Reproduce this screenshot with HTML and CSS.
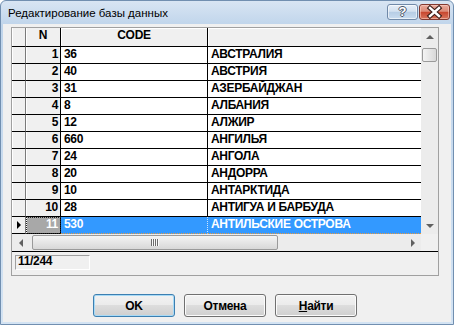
FILE: index.html
```html
<!DOCTYPE html>
<html lang="ru">
<head>
    <meta charset="UTF-8">
    <title>Редактирование базы данных</title>
    <link rel="stylesheet" href="styles.css">
</head>
<body>

<div class="window">
    <div class="titlebar">
        <span class="title">Редактирование базы данных</span>
        <div class="caption-buttons">
            <div class="cap-btn help">?</div>
            <div class="cap-btn close">
                <svg width="29" height="14" viewBox="0 0 29 14">
                    <path d="M10 3 L19 11 M19 3 L10 11" stroke="#3b1d18" stroke-width="4.6" stroke-linecap="square"/>
                    <path d="M10 3 L19 11 M19 3 L10 11" stroke="#fff" stroke-width="2.4" stroke-linecap="square"/>
                </svg>
            </div>
        </div>
    </div>

    <div class="client">
        <div class="dbbox">
            <div class="grid">
                <div class="table">
                    <div class="row head">
                        <div class="ind"></div><div class="num">N</div><div class="code">CODE</div><div class="name"></div>
                    </div>
                    <div class="row"><div class="ind"></div><div class="num">1</div><div class="code">36</div><div class="name">АВСТРАЛИЯ</div></div>
                    <div class="row"><div class="ind"></div><div class="num">2</div><div class="code">40</div><div class="name">АВСТРИЯ</div></div>
                    <div class="row"><div class="ind"></div><div class="num">3</div><div class="code">31</div><div class="name">АЗЕРБАЙДЖАН</div></div>
                    <div class="row"><div class="ind"></div><div class="num">4</div><div class="code">8</div><div class="name">АЛБАНИЯ</div></div>
                    <div class="row"><div class="ind"></div><div class="num">5</div><div class="code">12</div><div class="name">АЛЖИР</div></div>
                    <div class="row"><div class="ind"></div><div class="num">6</div><div class="code">660</div><div class="name">АНГИЛЬЯ</div></div>
                    <div class="row"><div class="ind"></div><div class="num">7</div><div class="code">24</div><div class="name">АНГОЛА</div></div>
                    <div class="row"><div class="ind"></div><div class="num">8</div><div class="code">20</div><div class="name">АНДОРРА</div></div>
                    <div class="row"><div class="ind"></div><div class="num">9</div><div class="code">10</div><div class="name">АНТАРКТИДА</div></div>
                    <div class="row"><div class="ind"></div><div class="num">10</div><div class="code">28</div><div class="name">АНТИГУА И БАРБУДА</div></div>
                    <div class="row current"><div class="ind"><span class="pointer"></span></div><div class="num">11</div><div class="code">530</div><div class="name">АНТИЛЬСКИЕ ОСТРОВА</div></div>
                </div>

                <div class="vscroll">
                    <div class="sbtn"><span class="tri up"></span></div>
                    <div class="vthumb"></div>
                    <div class="vtrack"></div>
                    <div class="sbtn"><span class="tri down"></span></div>
                </div>

                <div class="hscroll">
                    <div class="sbtn"><span class="tri left"></span></div>
                    <div class="hthumb"><span class="grip"></span></div>
                    <div class="htrack"></div>
                    <div class="sbtn"><span class="tri right"></span></div>
                </div>
                <div class="corner"></div>
            </div>

            <div class="status">
                <div class="panel">11/244</div>
            </div>
        </div>

        <div class="buttons">
            <button class="btn default">OK</button>
            <button class="btn">Отмена</button>
            <button class="btn"><u>Н</u>айти</button>
        </div>
    </div>
</div>

</body>
</html>
```

FILE: styles.css
```css
body {
    margin: 0;
    background: #ffffff;
    font-family: "Liberation Sans", Arial, sans-serif;
}
.window {
    width: 454px;
    height: 325px;
    box-sizing: border-box;
    border: 1px solid #718fb0;
    border-radius: 6px 6px 0 0;
    background: linear-gradient(#d8e5f3, #c0d5eb 24px, #d3e3f3);
    padding: 0 2px 2px;
    display: flex;
    flex-direction: column;
}

/* title bar */
.titlebar {
    height: 23px;
    margin: 0 -2px;
    display: flex;
    justify-content: space-between;
    align-items: flex-start;
}
.title {
    font-size: 11.5px;
    line-height: 14px;
    padding: 5px 0 0 7px;
    color: #000;
}
.caption-buttons {
    display: flex;
    gap: 1px;
    margin: 3px 3px 0 0;
}
.cap-btn {
    width: 31px;
    height: 16px;
    box-sizing: border-box;
    border-radius: 3px;
    display: flex;
    align-items: center;
    justify-content: center;
}
.help {
    border: 1px solid #7089a8;
    background: linear-gradient(#e6eef8, #d3e1f0 45%, #b7cde5 52%, #c9dcef);
    box-shadow: inset 0 0 0 1px rgba(255, 255, 255, 0.6);
    color: #fff;
    font-weight: bold;
    font-size: 13px;
    line-height: 14px;
    text-shadow: 1px 0 #4a5566, -1px 0 #4a5566, 0 1px #4a5566, 0 -1px #4a5566;
}
.close {
    border: 1px solid #83392f;
    background: linear-gradient(#e9aa9c, #dc8a77 45%, #c8472f 52%, #d8755d);
    box-shadow: inset 0 0 0 1px rgba(255, 220, 210, 0.5);
}

/* client area */
.client {
    flex: 1;
    background: #f0f0f0;
    padding: 3px 12px 0 8px;
}
.dbbox {
    border: 1px solid #a0a0a0;
}
.grid {
    display: grid;
    grid-template-columns: 1fr 17px;
    grid-template-rows: 206px 17px;
    border-bottom: 1px solid #000;
}

/* rows */
.row {
    display: grid;
    grid-template-columns: 14px 35px 147px 1fr;
    height: 17px;
    font-size: 12px;
    font-weight: bold;
    letter-spacing: -0.3px;
    line-height: 14px;
    color: #000;
}
.row > div {
    box-sizing: border-box;
    border-bottom: 1px solid #000;
    white-space: nowrap;
    overflow: hidden;
}
.row .ind {
    background: #f0f0f0;
    border-right: 1px solid #7a7a7a;
    box-shadow: inset 1px 0 0 #fff;
}
.row .num {
    background: #f0f0f0;
    text-align: right;
    padding-right: 2px;
    border-right: 1px solid #000;
    box-shadow: inset 1px 0 0 #fff;
}
.row .code {
    background: #fff;
    padding-left: 3px;
    border-right: 1px solid #000;
}
.row .name {
    background: #fff;
    padding-left: 3px;
}

.head {
    height: 19px;
}
.head > div {
    box-shadow: inset 1px 1px 0 #fff;
}
.head .num, .head .code {
    text-align: center;
    padding: 0;
}
.head .code, .head .name {
    background: #f0f0f0;
}

.current .ind {
    display: flex;
    align-items: center;
    justify-content: center;
}
.pointer {
    width: 0;
    height: 0;
    border-left: 4px solid #000;
    border-top: 4px solid transparent;
    border-bottom: 4px solid transparent;
    margin-bottom: 1px;
}
.current .num {
    background: #a8a8a8;
    color: #fff;
    outline: 1px dotted #222;
    outline-offset: -1px;
}
.current .code, .current .name {
    background: #3399ff;
    color: #fff;
    border-bottom: 1px dotted #e89a40;
}
.current .code {
    border-right: 1px dotted #cfe6ff;
}

/* scroll bars */
.vscroll {
    background: #ececec;
    display: flex;
    flex-direction: column;
}
.hscroll {
    background: #ececec;
    display: flex;
}
.sbtn {
    width: 17px;
    height: 17px;
    flex: none;
    display: flex;
    align-items: center;
    justify-content: center;
}
.tri {
    width: 0;
    height: 0;
}
.tri.up {
    border-left: 4px solid transparent;
    border-right: 4px solid transparent;
    border-bottom: 4px solid #606060;
}
.tri.down {
    border-left: 4px solid transparent;
    border-right: 4px solid transparent;
    border-top: 4px solid #606060;
}
.tri.left {
    border-top: 4px solid transparent;
    border-bottom: 4px solid transparent;
    border-right: 4px solid #606060;
}
.tri.right {
    border-top: 4px solid transparent;
    border-bottom: 4px solid transparent;
    border-left: 4px solid #606060;
}
.vthumb {
    width: 15px;
    height: 14px;
    margin: 3px 0 0 1px;
    box-sizing: border-box;
    border: 1px solid #9a9a9a;
    border-radius: 2px;
    background: linear-gradient(90deg, #f4f4f4, #e6e6e6 50%, #d8d8d8);
}
.vtrack {
    flex: 1;
}
.hthumb {
    width: 246px;
    height: 15px;
    margin: 1px 0 0 3px;
    box-sizing: border-box;
    border: 1px solid #9a9a9a;
    border-radius: 2px;
    background: linear-gradient(#f4f4f4, #e6e6e6 50%, #d8d8d8);
    display: flex;
    align-items: center;
    justify-content: center;
}
.grip {
    width: 8px;
    height: 7px;
    background: repeating-linear-gradient(90deg, #6d6d6d 0 1px, #fafafa 1px 2px);
}
.htrack {
    flex: 1;
}
.corner {
    background: #f0f0f0;
}

/* status bar */
.status {
    height: 20px;
    background: #f0f0f0;
}
.panel {
    width: 75px;
    height: 15px;
    box-sizing: border-box;
    margin: 3px 0 0 3px;
    padding-left: 2px;
    border-top: 1px solid #a0a0a0;
    border-left: 1px solid #a0a0a0;
    border-bottom: 1px solid #fff;
    border-right: 1px solid #fff;
    font-size: 12px;
    font-weight: bold;
    letter-spacing: -0.3px;
    line-height: 11px;
}

/* buttons */
.buttons {
    display: flex;
    justify-content: center;
    gap: 9px;
    margin-top: 18px;
}
.btn {
    width: 82px;
    height: 23px;
    padding: 0;
    border: 1px solid #707070;
    border-radius: 3px;
    background: linear-gradient(#f2f2f2, #ebebeb 50%, #dddddd 50%, #cfcfcf);
    box-shadow: inset 0 0 0 1px #fbfbfb;
    font-family: "Liberation Sans", Arial, sans-serif;
    font-size: 12px;
    font-weight: bold;
    letter-spacing: -0.3px;
    color: #000;
}
.btn.default {
    border-color: #3c7fb1;
    box-shadow: inset 0 0 0 1px #a8daf6;
}
```
